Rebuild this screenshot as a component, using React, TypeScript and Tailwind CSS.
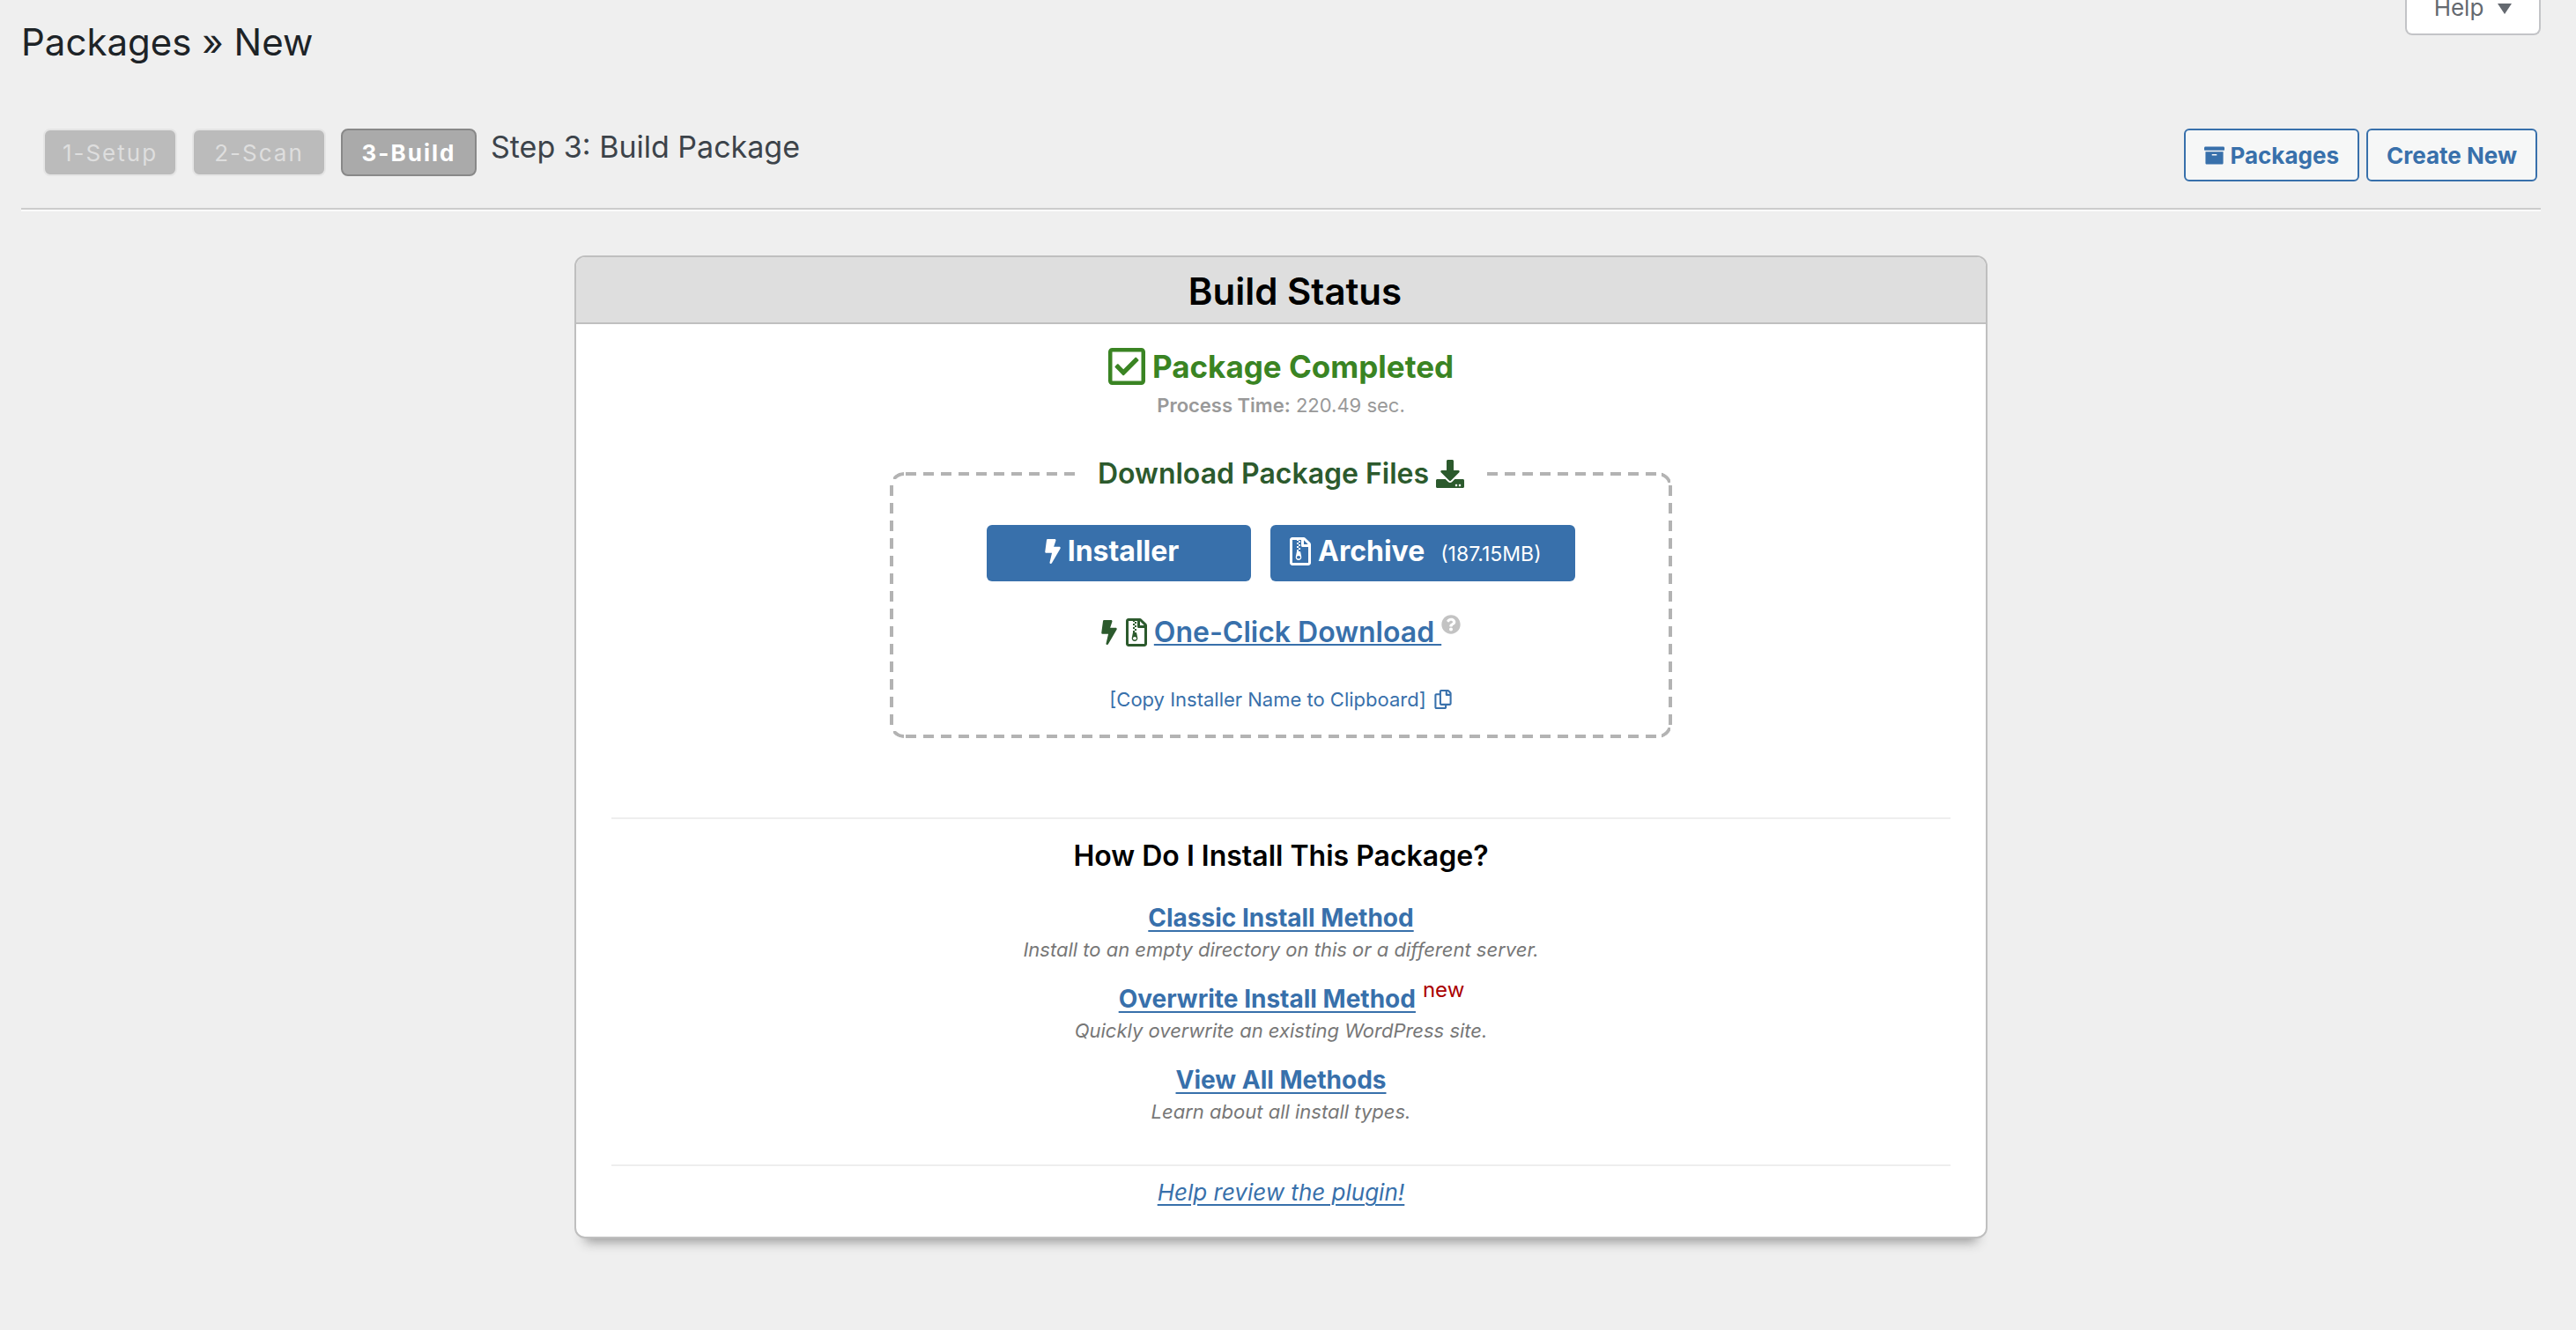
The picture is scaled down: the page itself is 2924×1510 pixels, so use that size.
import type { ReactNode } from "react";
import {
  FaArchive,
  FaBolt,
  FaDownload,
  FaQuestionCircle,
  FaRegCheckSquare,
  FaRegCopy,
  FaRegFileArchive,
} from "react-icons/fa";

const steps = [
  { label: "1-Setup", active: false },
  { label: "2-Scan", active: false },
  { label: "3-Build", active: true },
];

const methods = [
  {
    name: "Classic Install Method",
    description: "Install to an empty directory on this or a different server.",
    isNew: false,
  },
  {
    name: "Overwrite Install Method",
    description: "Quickly overwrite an existing WordPress site.",
    isNew: true,
  },
  {
    name: "View All Methods",
    description: "Learn about all install types.",
    isNew: false,
  },
];

function OutlineButton({ children }: { children: ReactNode }) {
  return (
    <button
      type="button"
      className="flex h-[60px] items-center gap-1.5 rounded-md border-2 border-[#3870ab] bg-[#f6f7f7] px-[21px] text-[26px] font-bold text-[#3870ab]"
    >
      {children}
    </button>
  );
}

function Header() {
  return (
    <header>
      <div className="flex items-start justify-between">
        <h1 className="pt-5 text-[42px] leading-[56px] text-[#1d2327]">Packages » New</h1>
        <button
          type="button"
          className="flex h-10 w-[154px] items-start justify-center gap-4 rounded-b-lg border-2 border-t-0 border-[#c3c4c7] bg-white text-[26px] leading-[18px] text-[#646970]"
        >
          Help
          <svg viewBox="0 0 16 12" className="mt-1 h-3 w-4" fill="currentColor" aria-hidden="true">
            <path d="M0 0h16L8 12z" />
          </svg>
        </button>
      </div>
      <div className="mt-[70px] flex items-start justify-between border-b-2 border-[#ccc] pr-1 pb-[30px] pl-[25px] shadow-[0_2px_0_#fafafa]">
        <div className="flex items-start">
          <ol className="flex gap-[17px]">
            {steps.map((step) => (
              <li
                key={step.label}
                className={
                  step.active
                    ? "flex h-[54px] w-[154px] items-center justify-center rounded-lg border-2 border-[#888] bg-[#aaa] text-[26px] font-bold tracking-[2px] text-white"
                    : "flex h-[54px] w-[152px] items-center justify-center rounded-lg border-2 border-[#e5e5e5] bg-[#bbb] text-[26px] tracking-[2px] text-[#dedede]"
                }
              >
                {step.label}
              </li>
            ))}
          </ol>
          <h2 className="ml-4 text-[34px] leading-[42px] text-[#3c434a]">Step 3: Build Package</h2>
        </div>
        <nav className="flex gap-2">
          <OutlineButton>
            <FaArchive className="size-[23px]" aria-hidden="true" />
            Packages
          </OutlineButton>
          <OutlineButton>Create New</OutlineButton>
        </nav>
      </div>
    </header>
  );
}

function DownloadBox() {
  return (
    <section className="relative mx-auto mt-[60px] h-[302px] w-full max-w-[888px]">
      <div
        aria-hidden="true"
        className="absolute inset-0 rounded-2xl border-4 border-[#b3b3b3] [mask:repeating-linear-gradient(90deg,#000_0_12px,transparent_12px_20px)_18px_0/852px_4px_no-repeat,repeating-linear-gradient(90deg,#000_0_12px,transparent_12px_20px)_18px_100%/852px_4px_no-repeat,repeating-linear-gradient(#000_0_12px,transparent_12px_20px)_0_15px/4px_272px_no-repeat,repeating-linear-gradient(#000_0_12px,transparent_12px_20px)_100%_15px/4px_272px_no-repeat,linear-gradient(#000,#000)_4px_0/12px_8px_no-repeat,linear-gradient(#000,#000)_4px_100%/12px_8px_no-repeat,linear-gradient(#000,#000)_calc(100%_-_2px)_0/10px_12px_no-repeat,linear-gradient(#000,#000)_calc(100%_-_2px)_100%/10px_12px_no-repeat]"
      />
      <div className="relative flex flex-col items-center">
        <h3 className="-mt-[18px] flex h-10 w-[460px] items-center justify-center gap-2 bg-white text-[32px] font-semibold text-[#2c5a2d]">
          Download Package Files
          <FaDownload className="size-8" aria-hidden="true" />
        </h3>
        <div className="mt-[38px] flex gap-[22px]">
          <button
            type="button"
            className="flex h-16 w-[300px] items-center justify-center gap-2 rounded-md bg-[#3870ab] pr-4 pb-1 text-[32px] font-bold text-white"
          >
            <FaBolt className="h-7 w-[18px]" aria-hidden="true" />
            Installer
          </button>
          <button
            type="button"
            className="flex h-16 w-[346px] items-center gap-2 rounded-md bg-[#3870ab] pb-1 pl-[22px] text-[32px] font-bold text-white"
          >
            <FaRegFileArchive className="h-8 w-6" aria-hidden="true" />
            <span className="flex items-baseline gap-[18px]">
              Archive
              <span className="text-[23px] font-normal">(187.15MB)</span>
            </span>
          </button>
        </div>
        <div className="mt-[38px] flex h-10 items-center text-[32px] font-semibold">
          <FaBolt className="h-7 w-[18px] text-[#2c5a2d]" aria-hidden="true" />
          <FaRegFileArchive className="mr-2 ml-2.5 h-8 w-6 text-[#2c5a2d]" aria-hidden="true" />
          <a href="#one-click" className="whitespace-pre text-[#3870ab] underline decoration-2 underline-offset-2">
            {"One-Click Download "}
          </a>
          <button type="button" aria-label="About one-click download" className="self-start text-[#c3c3c3]">
            <FaQuestionCircle className="size-[22px]" aria-hidden="true" />
          </button>
        </div>
        <button type="button" className="mt-[38px] flex h-9 items-center gap-2 text-[22px] text-[#3870ab]">
          [Copy Installer Name to Clipboard]
          <FaRegCopy className="size-[22px]" aria-hidden="true" />
        </button>
      </div>
    </section>
  );
}

function BuildStatusCard() {
  return (
    <main className="mx-auto mt-[52px] w-full max-w-[1604px] rounded-xl border-2 border-[#bfbfbf] bg-white shadow-[0_16px_12px_-12px_#999]">
      <h2 className="flex h-[76px] items-center justify-center rounded-t-[10px] border-b-2 border-[#bfbfbf] bg-[#dedede] pt-0.5 pl-8 text-[42px] font-semibold text-black">
        Build Status
      </h2>
      <div className="px-10 text-center">
        <p className="mt-6 flex h-12 items-center justify-center gap-2 text-[35px] font-bold text-[#3a8423]">
          <FaRegCheckSquare className="h-12 w-[42px]" aria-hidden="true" />
          Package Completed
        </p>
        <p className="mt-1 text-[22px] leading-8 text-[#999]">
          <b className="font-semibold">Process Time:</b> 220.49 sec.
        </p>
        <DownloadBox />
        <section className="mt-[90px] border-t-2 border-[#eee] pt-[22px]">
          <h3 className="text-[32px] leading-10 font-semibold text-black">How Do I Install This Package?</h3>
          <ul className="mt-8">
            {methods.map((method) => (
              <li key={method.name} className="h-[92px]">
                <div className={method.isNew ? "pl-6 text-[28px] leading-9" : "text-[28px] leading-9"}>
                  <a href="#install" className="font-bold text-[#3870ab] underline decoration-2 underline-offset-4">
                    {method.name}
                  </a>
                  {method.isNew && <sup className="ml-2 text-[24px] text-[#a00]">new</sup>}
                </div>
                <p className="text-[22px] leading-9 text-[#777] italic">{method.description}</p>
              </li>
            ))}
          </ul>
        </section>
        <footer className="mt-[22px] h-[82px] border-t-2 border-[#eee] pt-3">
          <a href="#review" className="text-[26px] leading-9 text-[#3870ab] italic underline decoration-2 underline-offset-4">
            Help review the plugin!
          </a>
        </footer>
      </div>
    </main>
  );
}

export default function App() {
  return (
    <div className="min-h-screen bg-[#efefef] pr-10 pl-6 font-['Inter',sans-serif]">
      <Header />
      <BuildStatusCard />
    </div>
  );
}
